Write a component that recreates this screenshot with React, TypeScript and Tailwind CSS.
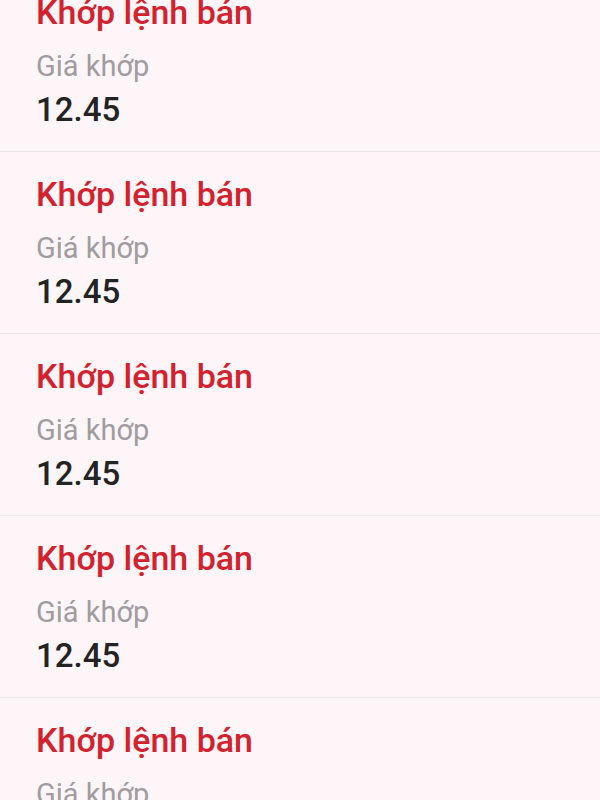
import React from 'react';

const MatchRow = ({ price }: { price: string }) => (
  <div className="h-[182px] border-b border-[#ece4e9] pl-[36px] pt-[22px]">
    <div className="text-[34px] leading-[40px] font-medium text-[#d3212d]">Khớp lệnh bán</div>
    <div className="mt-[17px] text-[29px] leading-[34px] text-[#a09ca0]">Giá khớp</div>
    <div className="mt-[8px] text-[33px] leading-[38px] font-medium text-[#232323]">{price}</div>
  </div>
);

const App = () => {
  const rows = ['12.45', '12.45', '12.45', '12.45', '12.45', '12.45'];

  return (
    <div className="h-[800px] w-full overflow-hidden bg-[#fdf5f8] font-['Roboto',sans-serif]">
      {/* list is scrolled a little, first row is cut at the top */}
      <div className="-mt-[30px]">
        {rows.map((price, i) => (
          <MatchRow key={i} price={price} />
        ))}
      </div>
    </div>
  );
};

export default App;
